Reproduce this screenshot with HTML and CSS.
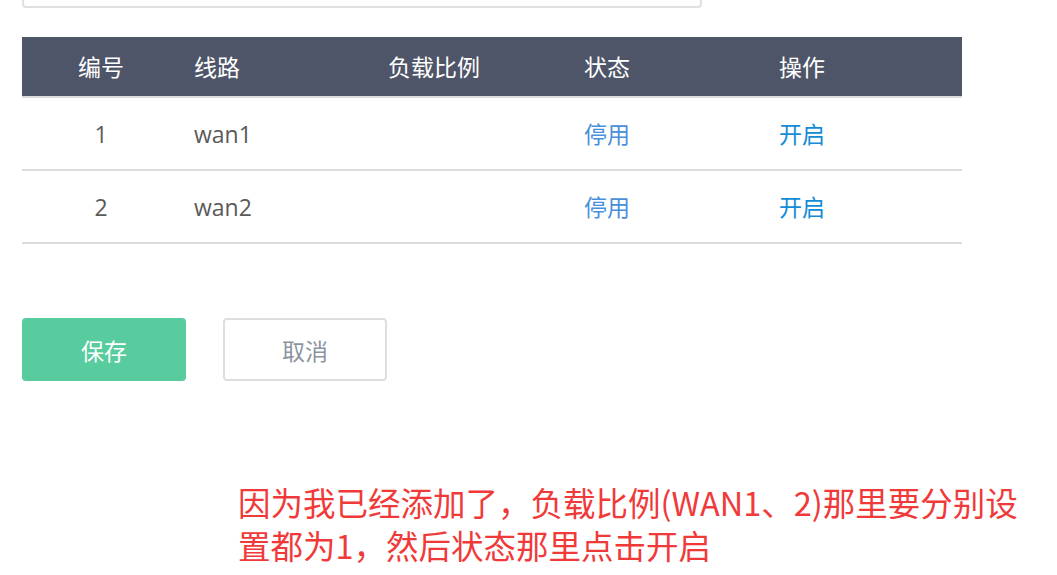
FILE: index.html
```html
<!DOCTYPE html>
<html lang="zh-CN">
<head>
<meta charset="utf-8">
<title>负载均衡</title>
<link rel="stylesheet" href="styles.css">
</head>
<body>
<div class="page">
  <div class="input-box"></div>
  <div class="table">
    <div class="row head">
      <div class="cell center">编号</div>
      <div class="cell">线路</div>
      <div class="cell">负载比例</div>
      <div class="cell">状态</div>
      <div class="cell">操作</div>
    </div>
    <div class="row">
      <div class="cell center">1</div>
      <div class="cell">wan1</div>
      <div class="cell"></div>
      <div class="cell status">停用</div>
      <div class="cell action">开启</div>
    </div>
    <div class="row">
      <div class="cell center">2</div>
      <div class="cell">wan2</div>
      <div class="cell"></div>
      <div class="cell status">停用</div>
      <div class="cell action">开启</div>
    </div>
  </div>
  <div class="buttons">
    <button class="btn save">保存</button>
    <button class="btn cancel">取消</button>
  </div>
  <p class="note">因为我已经添加了，负载比例(WAN1、2)那里要分别设<br>置都为1，然后状态那里点击开启</p>
</div>
</body>
</html>
```

FILE: styles.css
```css
html, body {
  margin: 0;
  padding: 0;
  background: #ffffff;
}

body {
  font-family: "Open Sans", "Noto Sans CJK SC", sans-serif;
  color: #5f6368;
}

.page {
  padding-left: 22px;
  width: 940px;
}

.input-box {
  width: 680px;
  height: 40px;
  margin-top: -32px;
  border: 2px solid #e0e0e0;
  border-radius: 4px;
  box-sizing: border-box;
}

.table {
  margin-top: 29px;
  width: 940px;
}

.row {
  display: grid;
  grid-template-columns: 158px 194px 196px 195px 1fr;
  height: 71px;
  align-items: center;
  border-bottom: 2px solid #dcdcdc;
  font-size: 23px;
  color: #5a5a5a;
}

.row.head {
  height: 59px;
  background: #4e5568;
  color: #ffffff;
}

.cell {
  padding-left: 14px;
  white-space: nowrap;
  line-height: 30px;
}

.cell.center {
  padding-left: 0;
  text-align: center;
}

.status {
  color: #4a8fdb;
}

.action {
  color: #138bd6;
}

.buttons {
  display: flex;
  gap: 37px;
  margin-top: 74px;
}

.btn {
  width: 164px;
  height: 63px;
  border-radius: 4px;
  font-family: "Open Sans", "Noto Sans CJK SC", sans-serif;
  font-size: 23px;
  padding: 0;
  box-sizing: border-box;
}

.btn.save {
  background: #58cc9e;
  border: none;
  color: #ffffff;
}

.btn.cancel {
  background: #ffffff;
  border: 2px solid #dedede;
  color: #8b959f;
}

.note {
  margin: 99px 0 0 216px;
  width: 820px;
  font-family: "Noto Sans CJK SC", sans-serif;
  font-size: 32.5px;
  line-height: 43px;
  color: #f03a3a;
  white-space: nowrap;
}
```
